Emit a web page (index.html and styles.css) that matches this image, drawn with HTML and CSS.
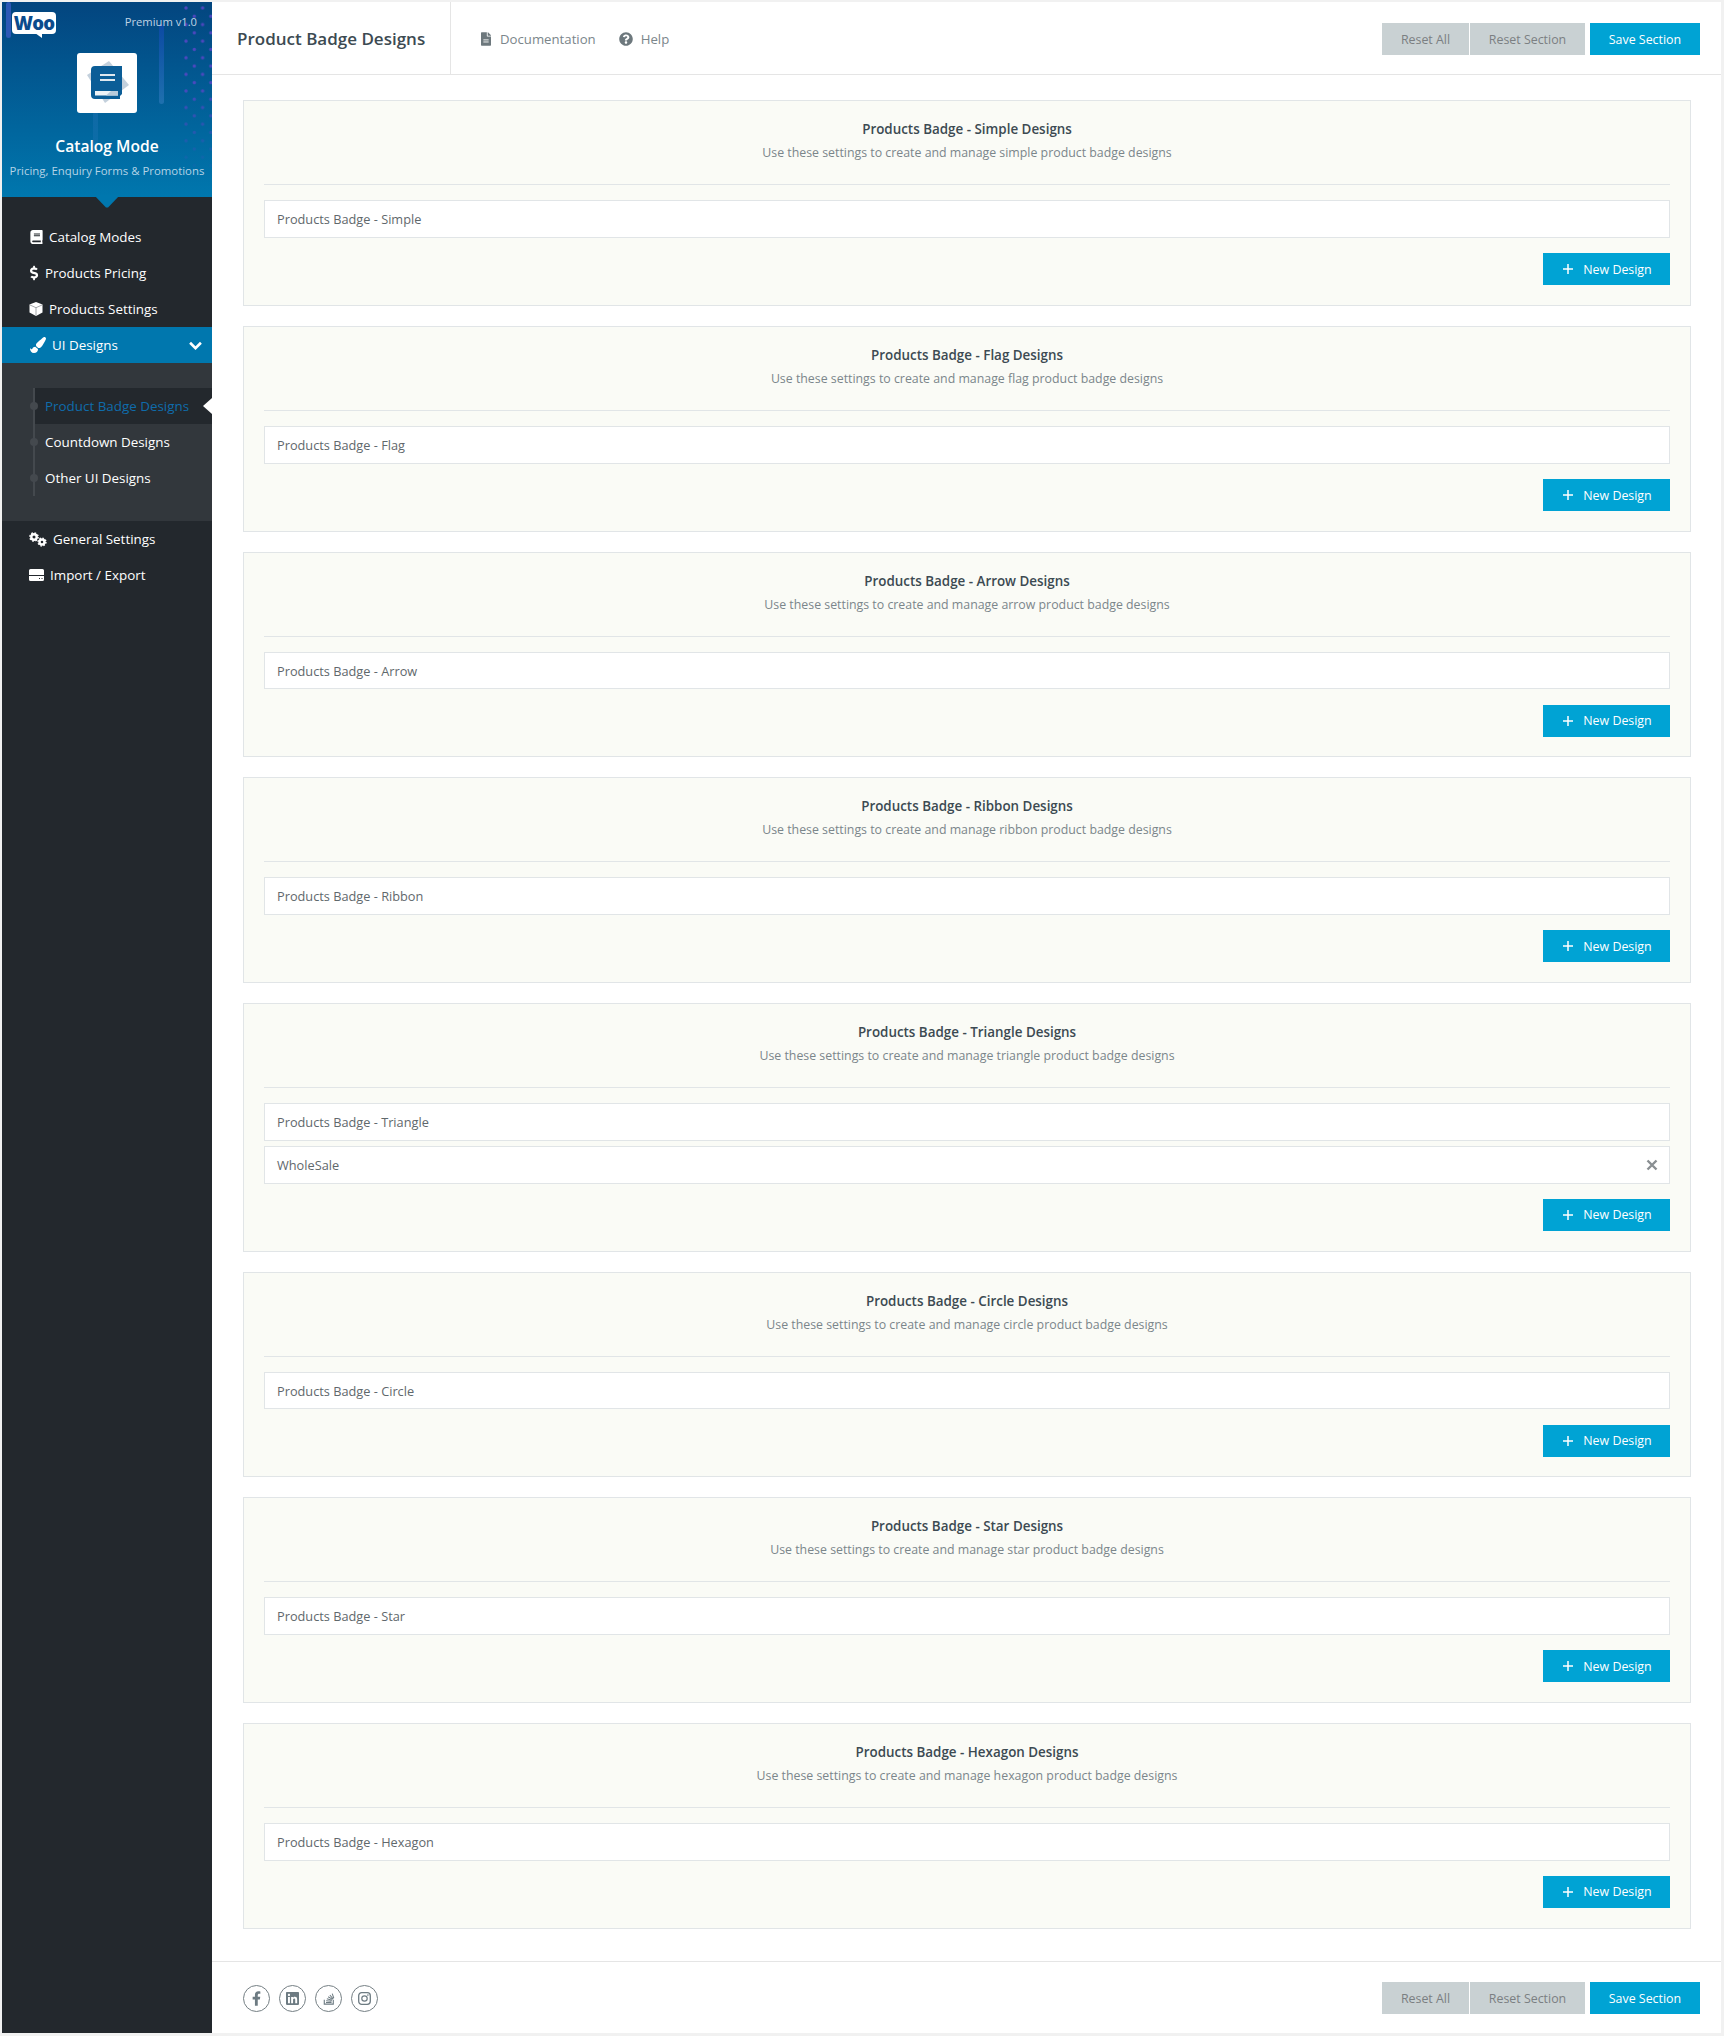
FILE: index.html
```html
<!DOCTYPE html>
<html lang="en">
<head>
<meta charset="utf-8">
<title>Product Badge Designs</title>
<link rel="stylesheet" href="styles.css">
</head>
<body>
<svg class="defs" width="0" height="0" aria-hidden="true">
  <symbol id="plus" viewBox="0 0 10 10"><path d="M5 0v10M0 5h10" fill="none" stroke="currentColor" stroke-width="1.5"/></symbol>
</svg>
<div class="app">
  <aside class="sidebar">
    <div class="brand">
      <i class="bar bar-a"></i><i class="bar bar-b"></i><i class="bar bar-c"></i>
      <svg class="dots" viewBox="0 0 28 170" width="28" height="170">
        <defs>
          <pattern id="dotgrid" width="16.6" height="16.6" patternUnits="userSpaceOnUse">
            <circle cx="2" cy="2" r="1.7" fill="#5a46c8"/><circle cx="10.3" cy="10.3" r="1.7" fill="#5a46c8"/>
          </pattern>
          <linearGradient id="dotfade" x1="0" y1="0" x2="0" y2="1"><stop offset=".45" stop-color="#fff"/><stop offset="1" stop-color="#000"/></linearGradient>
          <mask id="dotmask"><rect width="28" height="170" fill="url(#dotfade)"/></mask>
        </defs>
        <rect width="28" height="170" fill="url(#dotgrid)" mask="url(#dotmask)"/>
      </svg>
      <div class="brand-top">
        <span class="woo">Woo</span>
        <span class="version">Premium v1.0</span>
      </div>
      <div class="tile">
        <svg viewBox="0 0 46 46" width="46" height="46">
          <polygon points="3,15 25,1 45,25 21,43" fill="#c3d0dc"/>
          <path d="M11 6h27v28l-2 2v3H11a4 4 0 0 1-4-4V10a4 4 0 0 1 4-4z" fill="#0b5d97"/>
          <path d="M16 15h15M16 20h15" stroke="#dfe8ef" stroke-width="2"/>
          <rect x="11" y="31" width="23" height="4.500" fill="#eef3f7"/>
          <polygon points="22,35.500 27,31 34,31 34,35.500" fill="#b9cbdb"/>
        </svg>
      </div>
      <h2 class="brand-name">Catalog Mode</h2>
      <p class="brand-sub">Pricing, Enquiry Forms &amp; Promotions</p>
    </div>
    <nav class="nav">
      <a class="nav-item">
        <svg class="ic ic-book" viewBox="0 0 448 512"><path fill="currentColor" d="M448 360V24c0-13.300-10.700-24-24-24H96C43 0 0 43 0 96v320c0 53 43 96 96 96h328c13.300 0 24-10.700 24-24v-16c0-7.500-3.500-14.300-8.900-18.700-4.200-15.400-4.200-59.300 0-74.700 5.400-4.300 8.900-11.100 8.900-18.600zM128 134c0-3.300 2.700-6 6-6h212c3.300 0 6 2.700 6 6v20c0 3.300-2.700 6-6 6H134c-3.300 0-6-2.700-6-6v-20zm0 64c0-3.300 2.700-6 6-6h212c3.300 0 6 2.700 6 6v20c0 3.300-2.700 6-6 6H134c-3.300 0-6-2.700-6-6v-20zm253.400 250H96c-17.700 0-32-14.300-32-32 0-17.600 14.400-32 32-32h285.400c-1.900 17.100-1.900 46.900 0 64z"/></svg>
        <span>Catalog Modes</span>
      </a>
      <a class="nav-item">
        <svg class="ic ic-dollar" viewBox="0 0 320 512"><path fill="currentColor" d="M209.200 233.400l-108-31.600C88.700 198.200 80 186.500 80 173.500c0-16.300 13.200-29.500 29.500-29.500h66.300c12.200 0 24.200 3.700 34.200 10.500 6.100 4.100 14.300 3.100 19.500-2l34.800-34c7.100-6.900 6.100-18.400-1.800-24.500C238 74.800 207.400 64.100 176 64V16c0-8.800-7.200-16-16-16h-32c-8.800 0-16 7.200-16 16v48h-2.500C45.800 64-5.400 118.700.5 183.600c4.200 46.100 39.400 83.600 83.800 96.600l102.500 30c12.500 3.700 21.200 15.300 21.200 28.300 0 16.300-13.200 29.500-29.500 29.500h-66.300C100 368 88 364.300 78 357.500c-6.100-4.100-14.300-3.100-19.500 2l-34.800 34c-7.100 6.900-6.100 18.400 1.800 24.500 24.500 19.200 55.100 29.900 86.500 30v48c0 8.800 7.200 16 16 16h32c8.800 0 16-7.200 16-16v-48.200c46.600-.9 90.300-28.600 105.700-72.700 21.500-61.600-14.600-124.800-72.500-141.700z"/></svg>
        <span>Products Pricing</span>
      </a>
      <a class="nav-item">
        <svg class="ic ic-cube" viewBox="0 0 14 14">
          <path fill="currentColor" d="M7 0l6.500 2.600v8L7 14 .5 10.600v-8z"/>
          <path d="M1 3l6 2.700L13 3M7 5.700V13.500" fill="none" stroke="#8e9296" stroke-width=".8"/>
        </svg>
        <span>Products Settings</span>
      </a>
      <a class="nav-item nav-item-open">
        <svg class="ic ic-brush" viewBox="0 0 512 512"><path fill="currentColor" d="M167.020 309.340c-40.120 2.580-76.530 17.860-97.190 72.300-2.350 6.210-8 9.980-14.590 9.980-11.110 0-45.460-27.670-55.250-34.350C0 439.620 37.930 512 128 512c75.860 0 128-43.770 128-120.190 0-3.110-.65-6.080-.97-9.130l-88.010-73.340zM457.890 0c-15.160 0-29.370 6.710-40.210 16.450C213.270 199.050 192 203.340 192 257.090c0 13.700 3.250 26.760 8.730 38.700l63.820 53.180c7.210 1.800 14.640 3.030 22.390 3.030 62.110 0 98.110-45.470 211.160-256.460 7.380-14.350 13.900-29.850 13.900-45.990C512 20.640 486 0 457.890 0z"/></svg>
        <span>UI Designs</span>
        <svg class="chev" viewBox="0 0 12 8" width="13" height="9"><path d="M1 1.500l5 5 5-5" fill="none" stroke="currentColor" stroke-width="2.400"/></svg>
      </a>
      <div class="subnav">
        <div class="subnav-list">
          <a class="sub-item sub-item-active">Product Badge Designs</a>
          <a class="sub-item">Countdown Designs</a>
          <a class="sub-item">Other UI Designs</a>
        </div>
      </div>
      <a class="nav-item">
        <svg class="ic ic-cogs" viewBox="0 0 18 15">
          <circle cx="5" cy="5" r="2.700" fill="none" stroke="currentColor" stroke-width="2.400"/>
          <circle cx="5" cy="5" r="4.100" fill="none" stroke="currentColor" stroke-width="1.500" stroke-dasharray="1.600 1.620"/>
          <circle cx="13" cy="10" r="2.500" fill="none" stroke="currentColor" stroke-width="2.400"/>
          <circle cx="13" cy="10" r="3.900" fill="none" stroke="currentColor" stroke-width="1.500" stroke-dasharray="1.500 1.560"/>
        </svg>
        <span>General Settings</span>
      </a>
      <a class="nav-item">
        <svg class="ic ic-hdd" viewBox="0 0 15 12">
          <path fill="currentColor" d="M1.500 0h12A1.500 1.500 0 0 1 15 1.500V6H0V1.500A1.500 1.500 0 0 1 1.500 0zM0 7h15v3.500a1.500 1.500 0 0 1-1.500 1.500h-12A1.500 1.500 0 0 1 0 10.500z"/>
          <path d="M10 9.500h1M12.500 9.500h1" stroke="#23282d" stroke-width="1"/>
        </svg>
        <span>Import / Export</span>
      </a>
    </nav>
  </aside>

  <main class="main">
    <header class="topbar">
      <h1 class="page-title">Product Badge Designs</h1>
      <div class="toplinks">
        <a class="toplink">
          <svg class="ic-doc" viewBox="0 0 384 512"><path fill="currentColor" d="M224 136V0H24C10.700 0 0 10.700 0 24v464c0 13.300 10.700 24 24 24h336c13.300 0 24-10.700 24-24V160H248c-13.200 0-24-10.800-24-24zm160-14.100v6.100H256V0h6.100c6.400 0 12.500 2.500 17 7l97.900 98c4.500 4.500 7 10.600 7 16.900z"/><path d="M90 290h204M90 370h204" stroke="#fff" stroke-width="34"/></svg>
          <span>Documentation</span>
        </a>
        <a class="toplink">
          <svg class="ic-help" viewBox="0 0 512 512"><path fill="currentColor" d="M504 256c0 136.997-111.043 248-248 248S8 392.997 8 256C8 119.083 119.043 8 256 8s248 111.083 248 248zM262.655 90c-54.497 0-89.255 22.957-116.549 63.758-3.536 5.286-2.353 12.415 2.715 16.258l34.699 26.310c5.205 3.947 12.621 3.008 16.665-2.122 17.864-22.658 30.113-35.797 57.303-35.797 20.429 0 45.698 13.148 45.698 32.958 0 14.976-12.363 22.667-32.534 33.976C247.128 238.528 216 254.941 216 296v4c0 6.627 5.373 12 12 12h56c6.627 0 12-5.373 12-12v-1.333c0-28.462 83.186-29.647 83.186-106.667 0-58.002-60.165-102-116.531-102zM256 338c-25.365 0-46 20.635-46 46 0 25.364 20.635 46 46 46s46-20.636 46-46c0-25.365-20.635-46-46-46z"/></svg>
          <span>Help</span>
        </a>
      </div>
      <div class="actions">
        <button class="btn btn-grey btn-reset-all">Reset All</button>
        <button class="btn btn-grey btn-reset-sec">Reset Section</button>
        <button class="btn btn-blue btn-save">Save Section</button>
      </div>
    </header>

    <div class="content">
      <section class="card">
        <div class="card-head"><h3>Products Badge - Simple Designs</h3><p>Use these settings to create and manage simple product badge designs</p></div>
        <div class="rows"><div class="row">Products Badge - Simple</div></div>
        <div class="card-foot"><button class="btn btn-blue btn-new"><svg class="plus"><use href="#plus"/></svg>New Design</button></div>
      </section>
      <section class="card">
        <div class="card-head"><h3>Products Badge - Flag Designs</h3><p>Use these settings to create and manage flag product badge designs</p></div>
        <div class="rows"><div class="row">Products Badge - Flag</div></div>
        <div class="card-foot"><button class="btn btn-blue btn-new"><svg class="plus"><use href="#plus"/></svg>New Design</button></div>
      </section>
      <section class="card">
        <div class="card-head"><h3>Products Badge - Arrow Designs</h3><p>Use these settings to create and manage arrow product badge designs</p></div>
        <div class="rows"><div class="row">Products Badge - Arrow</div></div>
        <div class="card-foot"><button class="btn btn-blue btn-new"><svg class="plus"><use href="#plus"/></svg>New Design</button></div>
      </section>
      <section class="card">
        <div class="card-head"><h3>Products Badge - Ribbon Designs</h3><p>Use these settings to create and manage ribbon product badge designs</p></div>
        <div class="rows"><div class="row">Products Badge - Ribbon</div></div>
        <div class="card-foot"><button class="btn btn-blue btn-new"><svg class="plus"><use href="#plus"/></svg>New Design</button></div>
      </section>
      <section class="card">
        <div class="card-head"><h3>Products Badge - Triangle Designs</h3><p>Use these settings to create and manage triangle product badge designs</p></div>
        <div class="rows">
          <div class="row">Products Badge - Triangle</div>
          <div class="row row-removable">WholeSale
            <svg class="row-x" viewBox="0 0 12 12" width="12" height="12"><path d="M1.500 1.500l9 9M10.500 1.500l-9 9" fill="none" stroke="currentColor" stroke-width="2.400"/></svg>
          </div>
        </div>
        <div class="card-foot"><button class="btn btn-blue btn-new"><svg class="plus"><use href="#plus"/></svg>New Design</button></div>
      </section>
      <section class="card">
        <div class="card-head"><h3>Products Badge - Circle Designs</h3><p>Use these settings to create and manage circle product badge designs</p></div>
        <div class="rows"><div class="row">Products Badge - Circle</div></div>
        <div class="card-foot"><button class="btn btn-blue btn-new"><svg class="plus"><use href="#plus"/></svg>New Design</button></div>
      </section>
      <section class="card">
        <div class="card-head"><h3>Products Badge - Star Designs</h3><p>Use these settings to create and manage star product badge designs</p></div>
        <div class="rows"><div class="row">Products Badge - Star</div></div>
        <div class="card-foot"><button class="btn btn-blue btn-new"><svg class="plus"><use href="#plus"/></svg>New Design</button></div>
      </section>
      <section class="card">
        <div class="card-head"><h3>Products Badge - Hexagon Designs</h3><p>Use these settings to create and manage hexagon product badge designs</p></div>
        <div class="rows"><div class="row">Products Badge - Hexagon</div></div>
        <div class="card-foot"><button class="btn btn-blue btn-new"><svg class="plus"><use href="#plus"/></svg>New Design</button></div>
      </section>
    </div>

    <footer class="footer">
      <div class="socials">
        <a class="social"><svg viewBox="0 0 320 512" width="9" height="15"><path fill="currentColor" d="M279.140 288l14.220-92.660h-88.910v-60.130c0-25.350 12.420-50.060 52.240-50.060h40.420V6.260S260.430 0 225.360 0c-73.220 0-121.080 44.380-121.080 124.720v70.620H22.890V288h81.390v224h100.170V288z"/></svg></a>
        <a class="social"><svg viewBox="0 0 448 448" width="13" height="13"><path fill="currentColor" transform="translate(0 -32)" d="M416 32H31.900C14.300 32 0 46.500 0 64.300v383.400C0 465.500 14.300 480 31.900 480H416c17.600 0 32-14.500 32-32.300V64.300c0-17.800-14.400-32.300-32-32.300zM135.400 416H69V202.200h66.500V416zm-33.200-243c-21.300 0-38.500-17.300-38.500-38.500S80.900 96 102.200 96c21.200 0 38.500 17.300 38.500 38.500 0 21.300-17.200 38.500-38.500 38.500zm282.100 243h-66.400V312c0-24.800-.5-56.700-34.500-56.700-34.600 0-39.900 27-39.900 54.900V416h-66.400V202.200h63.700v29.200h.9c8.900-16.800 30.600-34.500 62.900-34.500 67.200 0 79.700 44.300 79.700 101.900V416z"/></svg></a>
        <a class="social"><svg viewBox="0 0 14 15" width="12" height="13"><path d="M1.500 9v5h10.500V9" fill="none" stroke="currentColor" stroke-width="1.300"/><path d="M3.500 12.200h6.500M3.700 10l6.300.7M4.500 7.800l6 1.600M6 5.500l5.200 3M8 3.400l3.800 4.600M10.800 1.800l1.800 5.400" fill="none" stroke="currentColor" stroke-width="1.200"/></svg></a>
        <a class="social"><svg viewBox="0 0 13 13" width="13" height="13"><rect x=".7" y=".7" width="11.600" height="11.600" rx="3" fill="none" stroke="currentColor" stroke-width="1.300"/><circle cx="6.500" cy="6.500" r="2.700" fill="none" stroke="currentColor" stroke-width="1.200"/><circle cx="9.900" cy="3.100" r=".8" fill="currentColor"/></svg></a>
      </div>
      <div class="actions">
        <button class="btn btn-grey btn-reset-all">Reset All</button>
        <button class="btn btn-grey btn-reset-sec">Reset Section</button>
        <button class="btn btn-blue btn-save">Save Section</button>
      </div>
    </footer>
  </main>
</div>
</body>
</html>
```

FILE: styles.css
```css
* { box-sizing: border-box; }
html, body { margin: 0; padding: 0; }
body {
  background: #f1f1f1;
  font-family: "Open Sans", sans-serif;
  font-size: 13px;
  color: #555;
  padding: 2px 3px 3px 2px;
}
.defs { position: absolute; }
h1, h2, h3, p { margin: 0; }
a { text-decoration: none; color: inherit; }

.app { display: flex; min-height: 2031px; align-items: stretch; }

/* Sidebar */
.sidebar { width: 210px; flex: none; background: #23282d; color: #fff; }
.brand {
  position: relative;
  height: 195px;
  padding-top: 10px;
  background: linear-gradient(180deg, #03457f 0%, #0077ae 100%);
  text-align: center;
  overflow: visible;
}
.brand::after {
  content: "";
  position: absolute;
  left: 92px;
  bottom: -11px;
  width: 26px;
  height: 13px;
  background: #0077ae;
  clip-path: polygon(0 0, 100% 0, 54% 96%, 46% 96%);
}
.bar { position: absolute; display: block; border-radius: 3px; }
.bar-a { left: 4px; top: 0; width: 5px; height: 36px; background: #2d58b5; }
.bar-b { left: 157px; top: 22px; width: 5px; height: 80px; background: linear-gradient(180deg, #0c4aa3, #1e70ae); }
.bar-c { left: 91px; top: 110px; width: 5px; height: 40px; background: linear-gradient(180deg, #0f69a6, #0b6ea8); }
.dots { position: absolute; right: 0; top: 4px; opacity: .85; }
.brand-top {
  position: relative;
  display: flex;
  justify-content: space-between;
  align-items: flex-start;
  height: 41px;
  padding: 0 15px 0 10px;
}
.woo {
  position: relative;
  display: block;
  width: 44px;
  height: 22px;
  background: #fff;
  border-radius: 4px;
  color: #0b4b8c;
  font-weight: 800;
  font-size: 18.5px;
  line-height: 21px;
  letter-spacing: -.8px;
}
.woo::after {
  content: "";
  position: absolute;
  left: 23px;
  bottom: -4px;
  width: 7px;
  height: 5px;
  background: #fff;
  clip-path: polygon(0 0, 100% 0, 100% 100%);
}
.version { font-size: 11.2px; line-height: 20px; color: #c0d4e4; }
.tile {
  position: relative;
  width: 60px;
  height: 60px;
  margin: 0 auto;
  background: #fff;
  border-radius: 3px;
  display: flex;
  align-items: center;
  justify-content: center;
}
.brand-name {
  position: relative;
  margin-top: 22px;
  font-size: 15.6px;
  line-height: 22px;
  font-weight: 600;
  color: #fff;
}
.brand-sub { position: relative; margin-top: 4px; font-size: 11.4px; line-height: 20px; color: #b4d3e6; white-space: nowrap; }

.nav { padding-top: 22px; }
.nav-item {
  display: flex;
  align-items: center;
  height: 36px;
  padding-left: 27px;
  font-size: 13.4px;
  color: #fff;
}
.ic { flex: none; display: block; }
.ic-book { width: 13px; height: 14px; margin-right: 6px; margin-left: 1px; }
.ic-dollar { width: 9px; height: 16px; margin-right: 6px; margin-left: 1px; }
.ic-cube { width: 14px; height: 14px; margin-right: 6px; }
.ic-brush { width: 16px; height: 16px; margin-right: 6px; margin-left: 1px; }
.ic-cogs { width: 18px; height: 15px; margin-right: 6px; }
.ic-hdd { width: 15px; height: 12px; margin-right: 6px; }
.nav-item-open { background: #0077ae; position: relative; }
.chev { position: absolute; right: 10px; top: 14px; }

.subnav { background: #32373c; padding: 25px 0 25px 0; }
.subnav-list {
  position: relative;
  margin-left: 31px;
  height: 108px;
  border-left: 2px solid #44494e;
}
.sub-item {
  position: relative;
  display: flex;
  align-items: center;
  height: 36px;
  padding-left: 10px;
  font-size: 13.4px;
  color: #fff;
}
.sub-item::before {
  content: "";
  position: absolute;
  left: -5px;
  top: 14px;
  width: 8px;
  height: 8px;
  border-radius: 50%;
  background: #44494e;
}
.sub-item-active { background: #23282d; color: #0f6cab; }
.sub-item-active::after {
  content: "";
  position: absolute;
  right: 0;
  top: 10px;
  width: 9px;
  height: 16px;
  background: #fff;
  clip-path: polygon(100% 0, 100% 100%, 0 50%);
}

/* Main */
.main { flex: 1; min-width: 0; background: #fff; display: flex; flex-direction: column; }
.topbar {
  display: flex;
  align-items: stretch;
  height: 73px;
  border-bottom: 1px solid #e5e5e5;
  padding-right: 21px;
}
.page-title {
  width: 239px;
  flex: none;
  padding-left: 25px;
  border-right: 1px solid #e5e5e5;
  font-size: 17px;
  font-weight: 600;
  line-height: 73px;
  color: #3c4a52;
}
.toplinks { display: flex; align-items: center; flex: 1; padding-left: 30px; gap: 23px; padding-top: 1px; }
.toplink { display: flex; align-items: center; color: #7b868b; font-size: 13.2px; }
.ic-doc { width: 10px; height: 14px; margin-right: 9px; color: #6d787d; }
.ic-help { width: 14px; height: 14px; margin-right: 8px; color: #6d787d; }

.actions { display: flex; align-items: center; }
.topbar .actions { padding-top: 2px; }
.btn {
  border: 0;
  margin: 0;
  height: 32px;
  padding: 0;
  font-family: "Open Sans", sans-serif;
  font-size: 12.4px;
  display: flex;
  align-items: center;
  justify-content: center;
}
.btn-grey { background: #c9d1d3; color: #7b7f82; }
.btn-blue { background: #00a3d4; color: #fff; }
.btn-reset-all { width: 87px; margin-right: 1px; }
.btn-reset-sec { width: 115px; margin-right: 5px; }
.btn-save { width: 110px; }

.content { flex: 1; padding: 25.400px 30px 0 31px; }
.card {
  background: #fafbf6;
  border: 1px solid #e1e5e7;
  margin-bottom: 20px;
  padding: 0 20px;
}
.card-head {
  height: 84px;
  padding-top: 17px;
  border-bottom: 1px solid #e1e5e7;
  text-align: center;
}
.card-head h3 { font-size: 13.4px; line-height: 22px; font-weight: 600; color: #3c4a52; }
.card-head p { font-size: 12.35px; line-height: 22px; margin-top: 2px; color: #7b868b; }
.rows { padding-top: 15px; display: flex; flex-direction: column; gap: 5.200px; }
.row {
  position: relative;
  height: 37.600px;
  background: #fff;
  border: 1px solid #e1e5e7;
  padding-left: 12px;
  font-size: 12.75px;
  font-weight: 500;
  line-height: 37.500px;
  color: #5f686c;
}
.row-x { position: absolute; right: 11px; top: 12px; color: #8a8f92; }
.card-foot { display: flex; justify-content: flex-end; padding: 15.400px 0 19.710px; }
.btn-new { width: 127px; padding-left: 2px; }
.plus { width: 10px; height: 10px; margin-right: 10px; color: #fff; }

.footer {
  height: 72px;
  border-top: 1px solid #e5e5e5;
  display: flex;
  align-items: center;
  justify-content: space-between;
  padding: 1px 21px 0 31px;
}
.socials { display: flex; gap: 9px; }
.social {
  width: 27px;
  height: 27px;
  border: 1px solid #757f84;
  border-radius: 50%;
  display: flex;
  align-items: center;
  justify-content: center;
  color: #6d7b82;
}
```
